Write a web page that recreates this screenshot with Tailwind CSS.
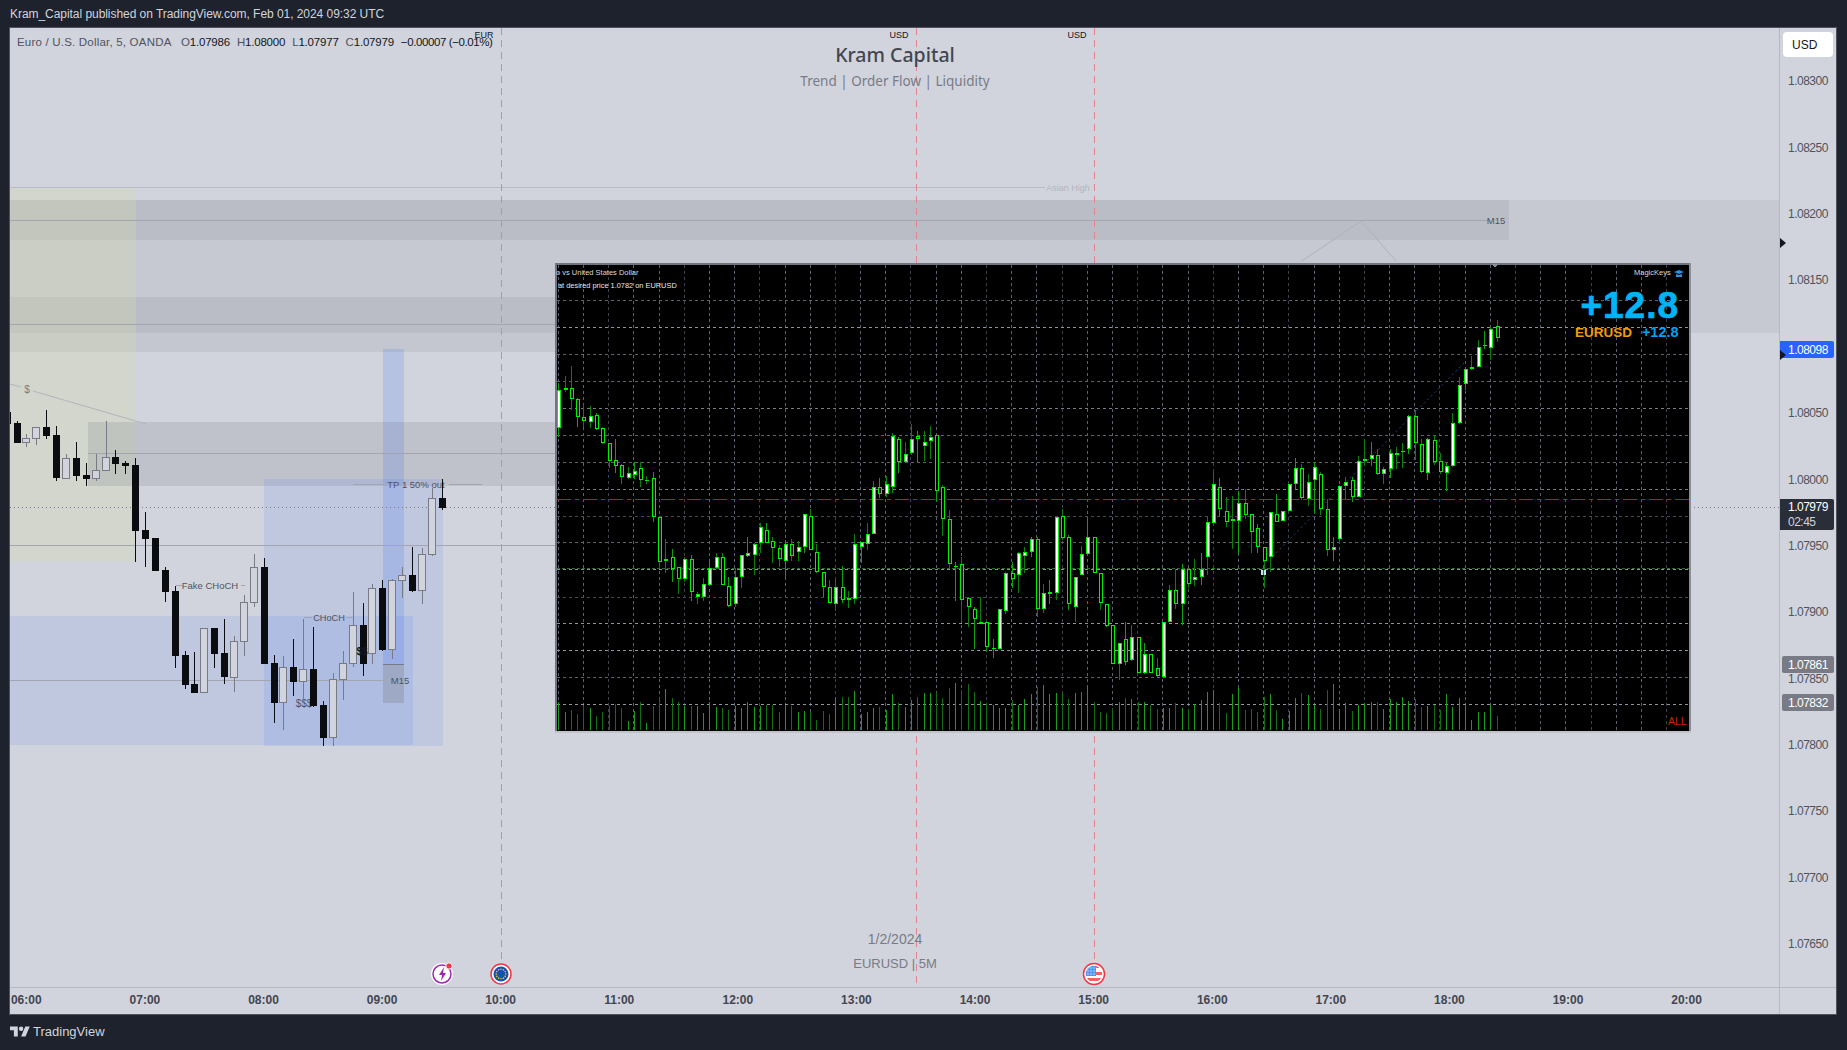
<!DOCTYPE html>
<html lang="en">
<head>
    <meta charset="UTF-8">
    <title>EURUSD chart - TradingView</title>
    <script src="https://cdn.jsdelivr.net/npm/@tailwindcss/browser@4"></script>
</head>
<body class="bg-[#1e222d] h-[1050px] w-[1847px] overflow-hidden font-['Liberation_Sans',sans-serif]">
    <!-- top bar -->
    <div class="h-[27px] pl-[10px] flex items-center text-[12px] tracking-[-0.05px] text-[#d1d4dc]">Kram_Capital published on TradingView.com, Feb 01, 2024 09:32 UTC</div>

    <!-- chart frame -->
    <div class="ml-[9px] w-[1828px] border border-[#50535e] bg-[#d1d4dc]">
        <div class="flex h-[959px]">
            <div class="relative w-[1769px] overflow-hidden">
                <svg id="chart" width="1769" height="959" viewBox="10 28 1769 959" class="block" font-family="'Liberation Sans', sans-serif" shape-rendering="crispEdges"></svg>
                <!-- legend -->
                <div class="absolute left-[7px] top-[6px] flex gap-[7px] text-[11.5px] tracking-[-0.2px] text-[#131722]">
                    <span class="text-[#50535e] w-[157px] whitespace-nowrap tracking-[0.2px]">Euro / U.S. Dollar, 5, OANDA</span>
                    <span class="whitespace-nowrap"><span class="text-[#50535e]">O</span>1.07986</span>
                    <span class="whitespace-nowrap"><span class="text-[#50535e]">H</span>1.08000</span>
                    <span class="whitespace-nowrap"><span class="text-[#50535e]">L</span>1.07977</span>
                    <span class="whitespace-nowrap"><span class="text-[#50535e]">C</span>1.07979</span>
                    <span class="whitespace-nowrap tracking-[-0.4px]">−0.00007 (−0.01%)</span>
                </div>
            </div>
            <!-- price scale -->
            <div class="relative w-[57px] border-l border-[#b6b9c2] pt-[20px] pl-[8px] text-[12px] tracking-[-0.5px] text-[#50535e]">
                <div class="h-[66.4px] flex items-center">1.08300</div>
                <div class="h-[66.4px] flex items-center">1.08250</div>
                <div class="h-[66.4px] flex items-center">1.08200</div>
                <div class="h-[66.4px] flex items-center">1.08150</div>
                <div class="h-[66.4px]"></div>
                <div class="h-[66.4px] flex items-center">1.08050</div>
                <div class="h-[66.4px] flex items-center">1.08000</div>
                <div class="h-[66.4px] flex items-center">1.07950</div>
                <div class="h-[66.4px] flex items-center">1.07900</div>
                <div class="h-[66.4px] flex items-center">1.07850</div>
                <div class="h-[66.4px] flex items-center">1.07800</div>
                <div class="h-[66.4px] flex items-center">1.07750</div>
                <div class="h-[66.4px] flex items-center">1.07700</div>
                <div class="h-[66.4px] flex items-center">1.07650</div>

                <div class="absolute left-[3px] top-[4px] w-[50px] h-[25px] bg-white rounded-[4px] pl-[9px] flex items-center tracking-normal text-[#131722]">USD</div>
                <div class="absolute left-0 top-[313px] w-[54px] h-[17px] bg-[#2962ff] rounded-r-[2px] pl-[8px] flex items-center text-white">1.08098</div>
                <div class="absolute left-0 top-[471px] w-[54px] h-[31px] bg-[#2a2e39] rounded-r-[2px] pl-[8px] flex flex-col justify-center leading-[15px] text-white">
                    <span>1.07979</span>
                    <span class="text-[#d1d4dc]">02:45</span>
                </div>
                <div class="absolute left-[2px] top-[628px] w-[52px] h-[17px] bg-[#787b86] rounded-[2px] pl-[6px] flex items-center text-white">1.07861</div>
                <div class="absolute left-[2px] top-[666px] w-[52px] h-[17px] bg-[#787b86] rounded-[2px] pl-[6px] flex items-center text-white">1.07832</div>

                <svg class="absolute left-0 top-[210px]" width="7" height="10"><path d="M0 0l6 5-6 5z" fill="#131722"/></svg>
                <svg class="absolute left-0 top-[322px]" width="7" height="10"><path d="M0 0l6 5-6 5z" fill="#131722"/></svg>
            </div>
        </div>
        <!-- time axis -->
        <div class="flex h-[27px] border-t border-[#b6b9c2] overflow-hidden">
            <div class="w-[1769px] overflow-hidden">
                <div class="flex -ml-[43px] h-full items-center pb-[2px] text-[12px] font-bold text-[#434651]">
                    <span class="w-[118.6px] shrink-0 text-center">06:00</span>
                    <span class="w-[118.6px] shrink-0 text-center">07:00</span>
                    <span class="w-[118.6px] shrink-0 text-center">08:00</span>
                    <span class="w-[118.6px] shrink-0 text-center">09:00</span>
                    <span class="w-[118.6px] shrink-0 text-center">10:00</span>
                    <span class="w-[118.6px] shrink-0 text-center">11:00</span>
                    <span class="w-[118.6px] shrink-0 text-center">12:00</span>
                    <span class="w-[118.6px] shrink-0 text-center">13:00</span>
                    <span class="w-[118.6px] shrink-0 text-center">14:00</span>
                    <span class="w-[118.6px] shrink-0 text-center">15:00</span>
                    <span class="w-[118.6px] shrink-0 text-center">16:00</span>
                    <span class="w-[118.6px] shrink-0 text-center">17:00</span>
                    <span class="w-[118.6px] shrink-0 text-center">18:00</span>
                    <span class="w-[118.6px] shrink-0 text-center">19:00</span>
                    <span class="w-[118.6px] shrink-0 text-center">20:00</span>
                </div>
            </div>
            <div class="w-[57px] border-l border-[#b6b9c2]"></div>
        </div>
    </div>

    <!-- footer -->
    <div class="h-[33px] pl-[10px] flex items-center gap-[3px] text-[13px] text-[#d1d4dc]">
        <svg width="20" height="16" viewBox="0 0 36 28" fill="#d1d4dc"><path d="M14 22H7V11H0V4h14v18zM28 22h-8l7.5-18h8L28 22z"/><circle cx="20" cy="8" r="4"/></svg>
        <span>TradingView</span>
    </div>

    <script>
        const svg = document.getElementById('chart');
        let out = '';

        function rect(x, y, w, h, fill, op) {
            out += `<rect x="${x}" y="${y}" width="${w}" height="${h}" fill="${fill}"${op ? ` fill-opacity="${op}"` : ''}/>`;
        }
        function line(x1, y1, x2, y2, stroke, extra) {
            out += `<line x1="${x1}" y1="${y1}" x2="${x2}" y2="${y2}" stroke="${stroke}" ${extra || ''}/>`;
        }
        function label(x, y, text, size, fill, extra) {
            out += `<text x="${x}" y="${y}" font-size="${size}" fill="${fill}" dominant-baseline="central" shape-rendering="auto" ${extra || ''}>${text}</text>`;
        }

        // drawn zones
        rect(10, 200, 1769, 133, '#787b86', .12);
        rect(10, 200, 1499, 40, '#787b86', .14);
        rect(10, 297, 546, 55, '#787b86', .14);
        rect(10, 187, 126, 374, '#d8dbaa', .3);
        rect(88, 422, 468, 64, '#787b86', .2);
        rect(10, 616, 403, 129, '#2962ff', .1);
        rect(264, 479, 179, 267, '#2962ff', .1);
        rect(383, 349, 21, 315, '#2962ff', .16);
        rect(383, 664, 21, 39, '#787b86', .3);
        rect(383, 664, 21, 1, '#787b86');

        // drawn lines
        line(10, 187.5, 1045, 187.5, '#b8bbc4');
        line(10, 220.5, 1490, 220.5, '#a3a6b0');
        line(10, 324.5, 556, 324.5, '#a3a6b0');
        line(88, 453.5, 556, 453.5, '#a3a6b0');
        line(10, 545.5, 556, 545.5, '#a3a6b0', 'stroke-width="1.5"');
        line(10, 680.5, 387, 680.5, '#a3a6b0');
        line(353, 484.5, 388, 484.5, '#a3a6b0');
        line(449, 484.5, 482, 484.5, '#a3a6b0');
        line(176, 585.5, 182, 585.5, '#a3a6b0');
        line(241, 585.5, 245, 585.5, '#a3a6b0');
        line(304, 617.5, 312, 617.5, '#a3a6b0');
        line(346, 617.5, 354, 617.5, '#a3a6b0');
        line(10, 384, 21, 387, '#b2b5be', 'shape-rendering="auto"');
        line(33, 391, 146, 424, '#b2b5be', 'shape-rendering="auto"');
        line(1302, 261, 1361, 221, '#aeb1ba', 'shape-rendering="auto"');
        line(1361, 221, 1396, 261, '#aeb1ba', 'shape-rendering="auto"');
        line(10, 507.5, 1779, 507.5, '#787b86', 'stroke-dasharray="1 3"');

        // session lines
        [501, 916, 1094].forEach(x => line(x + .5, 28, x + .5, 987, '#e0848f', 'stroke-dasharray="7 5"'));

        // chart labels
        label(1068, 187.5, 'Asian High', 9, '#b2b5be', 'text-anchor="middle"');
        label(1496, 220.5, 'M15', 9.5, '#50535e', 'text-anchor="middle"');
        label(27, 389.5, '$', 10, '#787b86', 'text-anchor="middle"');
        label(210, 585.5, 'Fake CHoCH', 9.5, '#50535e', 'text-anchor="middle"');
        label(329, 617.5, 'CHoCH', 9.2, '#50535e', 'text-anchor="middle"');
        label(416, 484.5, 'TP 1 50% out', 9.5, '#50535e', 'text-anchor="middle"');
        label(400, 680.5, 'M15', 9.5, '#50535e', 'text-anchor="middle"');
        label(304, 703, '$$$', 10, '#50535e', 'text-anchor="middle"');
        label(484, 35, 'EUR', 9, '#131722', 'text-anchor="middle"');
        label(899, 35, 'USD', 9, '#131722', 'text-anchor="middle"');
        label(1077, 35, 'USD', 9, '#131722', 'text-anchor="middle"');
        label(895, 54, 'Kram Capital', 19.5, '#434651', 'text-anchor="middle" font-weight="500" font-family="\'Noto Sans\', sans-serif"');
        label(895, 81, 'Trend | Order Flow | Liquidity', 13.5, '#787b86', 'text-anchor="middle" font-family="\'Noto Sans\', sans-serif"');
        label(895, 938.5, '1/2/2024', 14, '#787b86', 'text-anchor="middle"');
        label(895, 963, 'EURUSD | 5M', 13, '#787b86', 'text-anchor="middle"');

        // candles left of the inset window: [bull?, wick top, body top, body bottom, wick bottom], first is i=-2
        const tv = [
            [0,185,185,221,221],[0,213,219,278,278],[1,252,265,277,290],[1,232,232,265,284],[0,180,232,257,266],
            [0,228,255,383,392],[1,312,325,383,388],[0,277,324,377,392],[0,338,375,386,407],[1,312,361,385,392],
            [1,213,322,361,361],[0,300,322,342,372],[0,333,339,347,372],[0,324,345,542,635],[0,486,540,566,650],
            [0,564,564,662,662],[0,650,660,725,755],[0,708,724,917,953],[0,903,915,1004,1016],[0,906,1002,1028,1028],
            [1,835,835,1027,1027],[0,834,834,911,953],[0,807,909,980,1001],[1,858,874,980,1025],[1,735,757,874,917],
            [1,612,652,757,770],[0,624,651,941,941],[0,915,939,1058,1120],[1,918,952,1057,1139],[0,867,951,995,1037],
            [1,807,958,994,1060],[0,831,957,1067,1072],[0,1053,1065,1163,1188],[1,968,988,1162,1188],[1,903,940,988,1050],
            [1,726,826,940,950],[0,759,825,941,977],[1,702,715,910,941],[0,690,714,899,902],[1,687,691,898,926],
            [1,651,676,691,743],[0,590,675,722,725],[1,595,613,721,761],[1,415,445,613,617],[0,388,444,473,479]
        ];
        const zy = v => Math.round(350 + v / 3);
        tv.forEach((c, n) => {
            const x = Math.round(26.4 + (n - 2) * 9.888);
            const col = c[0] ? '#787b86' : '#0a0c10';
            rect(x, zy(c[1]), 1, zy(c[4]) - zy(c[1]), col);
            if (c[0]) {
                out += `<rect x="${x - 3.5}" y="${zy(c[2]) + .5}" width="7" height="${zy(c[3]) - zy(c[2])}" fill="#d1d4dc" stroke="#787b86"/>`;
            } else {
                rect(x - 3, zy(c[2]), 7, zy(c[3]) - zy(c[2]), col);
            }
        });
        label(362, 651, '$$', 10, '#131722', 'text-anchor="middle" font-weight="bold"');

        // inset MT4 screenshot
        rect(555, 263, 1136, 470, '#000');
        rect(555, 263, 1136, 2, '#707480');
        rect(555, 263, 2, 470, '#707480');
        rect(1689, 263, 2, 470, '#8a8d96');
        rect(555, 731, 1136, 2, '#c0c3c8');

        const hLines = [[300,'#5c6470'],[327,'#8d95a0'],[354,'#5c6470'],[381,'#5c6470'],[408,'#747c88'],[435,'#5c6470'],[462,'#5c6470'],[489,'#747c88'],[516,'#454950'],[542,'#5c6470'],[569,'#8d95a0'],[597,'#454950'],[623,'#8d95a0'],[650,'#8d95a0'],[677,'#5c6470'],[704,'#8d95a0']];
        for (let k = -1; k < 44; k++) {
            const x = Math.round(583 + 25.19 * k) + .5;
            line(x, 265, x, 731, k % 3 == 1 ? '#3d434c' : '#59626e', 'stroke-dasharray="3 3"');
        }
        hLines.forEach(h => line(557, h[0] + .5, 1689, h[0] + .5, h[1], 'stroke-dasharray="3 3"'));
        line(557, 499.5, 1689, 499.5, '#d01414', 'stroke-dasharray="14 4 4 4"');
        line(557, 568.5, 1689, 568.5, '#2f6b2f', 'stroke-dasharray="3 2"');
        line(1464, 363, 1270, 559, '#1f4a80', 'stroke-dasharray="2 3" shape-rendering="auto"');

        // volume bars, heights in px
        const vols = [28,18,20,16,24,22,14,18,24,26,22,9,19,28,7,24,32,41,32,28,24,24,24,17,28,23,22,20,24,22,28,23,24,25,25,18,24,24,18,19,18,10,19,16,33,33,33,39,16,18,22,23,20,36,27,23,30,33,37,37,38,32,42,47,40,46,38,29,27,25,22,22,30,25,31,36,43,45,36,37,37,31,37,38,43,28,18,17,22,28,32,31,28,28,25,21,22,22,27,22,21,26,30,38,40,27,17,36,42,20,21,18,33,36,20,11,19,32,37,35,25,21,40,46,21,27,19,25,27,28,28,21,31,28,33,29,31,23,24,25,20,36,23,32,24,10,18,18,25,14];

        // [white?, wick top, body top, body bottom, wick bottom], page px
        const mt = [
            [1,383,390,428,437],[1,376,388,390,392],[0,366,388,399,410],[0,398,399,417,427],[0,404,417,421,427],[1,406,416,422,428],[0,413,415,429,430],[0,427,428,443,444],[0,443,443,461,468],[0,439,460,466,473],
            [0,464,465,477,484],[1,467,473,478,479],[1,462,471,475,479],[0,462,468,480,487],[1,476,480,481,484],[0,472,478,517,522],[0,517,517,562,568],[1,539,559,561,573],[0,549,557,569,582],[0,567,567,579,594],
            [1,557,559,579,582],[0,555,559,592,601],[1,592,594,597,604],[1,578,584,597,601],[1,561,568,585,585],[1,553,557,568,569],[0,553,557,585,585],[0,577,586,606,607],[1,568,577,604,607],[1,555,555,577,588],
            [1,537,553,556,557],[1,543,544,555,575],[1,523,527,543,553],[0,523,530,543,543],[0,537,541,548,563],[0,545,548,559,567],[1,540,544,561,578],[0,539,544,556,561],[1,541,547,552,561],[1,514,514,547,553],
            [0,509,516,550,550],[0,544,552,572,573],[0,572,572,587,597],[0,580,587,603,603],[1,580,587,604,611],[0,566,587,600,603],[0,591,598,600,608],[1,534,544,599,604],[1,542,542,547,563],[1,523,534,544,550],
            [1,481,487,534,534],[0,478,487,494,498],[1,476,484,494,497],[1,433,436,487,493],[0,437,439,462,473],[1,442,454,462,462],[1,424,439,453,455],[0,431,436,439,462],[1,431,442,446,461],[1,426,437,441,459],
            [0,435,435,491,502],[0,485,487,519,536],[0,510,519,564,568],[1,562,566,567,601],[0,557,564,600,623],[0,597,598,607,627],[0,607,609,619,649],[1,597,622,624,623],[0,622,622,647,652],[1,639,648,649,658],
            [1,609,609,649,649],[1,572,573,611,614],[0,562,573,579,588],[1,552,553,575,593],[1,547,552,556,573],[1,537,539,552,557],[0,537,539,609,617],[1,584,593,609,613],[1,580,592,594,604],[1,517,517,593,600],
            [0,509,516,538,540],[0,535,537,604,610],[1,577,577,607,622],[1,546,554,575,575],[1,519,537,554,554],[0,537,537,573,573],[0,573,573,603,610],[0,604,604,626,627],[0,625,625,664,664],[1,643,643,664,680],
            [0,622,639,662,665],[1,625,637,660,661],[0,637,637,673,673],[1,643,654,673,674],[0,654,654,673,673],[0,658,668,676,677],[1,622,622,677,677],[1,585,590,622,622],[0,569,590,604,609],[1,564,569,604,625],
            [0,569,569,584,588],[1,559,577,580,586],[1,553,569,577,585],[1,517,522,557,575],[1,472,484,523,523],[0,478,487,509,517],[0,497,511,522,527],[1,496,519,521,549],[1,491,503,521,554],[0,489,503,515,519],
            [0,514,514,532,553],[0,524,528,547,553],[0,547,547,561,588],[1,512,512,557,572],[0,494,514,522,522],[1,511,511,521,521],[1,484,484,511,511],[1,458,468,484,489],[0,464,468,498,500],[1,474,482,499,506],
            [1,462,467,480,513],[0,472,474,509,515],[0,499,509,550,556],[1,537,547,550,561],[1,485,486,539,544],[1,477,482,486,500],[0,477,480,497,502],[1,456,461,497,497],[1,439,459,461,466],[1,442,455,459,466],
            [0,449,455,474,475],[1,467,469,474,484],[1,449,453,469,478],[1,447,453,455,469],[1,443,451,452,468],[1,415,416,449,454],[0,410,416,443,460],[0,439,444,472,473],[1,438,439,473,480],[0,435,440,462,465],
            [0,453,461,472,474],[1,463,466,473,491],[1,413,423,466,467],[1,377,385,423,424],[1,369,369,384,390],[1,356,367,369,370],[1,340,347,367,367],[1,331,345,346,349],[1,327,329,348,360],[0,320,326,338,342]
        ];
        mt.forEach((c, i) => {
            const x = Math.round(558.3 + 6.297 * i);
            const h = c[3] - c[2];
            rect(x, 730 - vols[i], 1, vols[i], c[0] ? '#1c9c1c' : '#126c12');
            rect(x, c[1], 1, c[4] - c[1], i % 3 == 0 ? '#0fa00f' : '#0b7f0b');
            rect(x - 1, c[2], 4, h, '#00f000');
            if (h > 2) rect(x, c[2] + 1, 2, h - 2, c[0] ? '#fff' : '#000');
        });
        rect(1261, 570, 5, 5, '#bfe6ee');
        rect(1263, 570, 1, 5, '#1c6b7a');
        out += `<path d="M1492 264h6l-3 4z" fill="#8a8d96"/>`;

        label(556, 272.5, 'o vs United States Dollar', 7.5, '#d8d8d8');
        label(558, 285, 'at desired price 1.0782 on EURUSD', 7.4, '#e8e8e8');
        label(1634, 272.5, 'MagicKeys', 7.5, '#d8d8d8');
        out += `<path d="M1674 272l5-2 5 2-5 2zM1676 274v3h6v-3l-3 1z" fill="#2f8fe0" shape-rendering="auto"/>`;
        label(1679, 305, '+12.8', 37, '#00b4f5', 'text-anchor="end" font-weight="bold" stroke="#00b4f5" stroke-width=".7" letter-spacing="1"');
        label(1575, 332, 'EURUSD', 13.5, '#f29a0e', 'font-weight="bold"');
        label(1678.6, 332, '+12.8', 14.5, '#00a3f0', 'text-anchor="end" font-weight="bold"');
        label(1668, 721, 'ALL', 10.5, '#c42a00');

        // event markers on the time axis
        out += '<g shape-rendering="auto">';
        out += `<circle cx="442" cy="974" r="10" fill="#fff" stroke="#fff" stroke-width="2"/><circle cx="442" cy="974" r="9" fill="#fff" stroke="#9c27b0" stroke-width="1.5"/>`;
        out += `<path d="M444 967l-5 8h3l-1 6 5-8h-3z" fill="#9c27b0"/>`;
        out += `<circle cx="449" cy="966" r="3.2" fill="#f23645" stroke="#fff"/>`;
        out += `<circle cx="501" cy="974" r="10" fill="#fff" stroke="#f23645" stroke-width="1.5"/><circle cx="501" cy="974" r="7.5" fill="#1552a8"/>`;
        for (let a = 0; a < 12; a += 1) {
            const t = a * Math.PI / 6;
            out += `<circle cx="${501 + 4.8 * Math.cos(t)}" cy="${974 + 4.8 * Math.sin(t)}" r=".8" fill="#e8c93a"/>`;
        }
        out += `<circle cx="1094" cy="974" r="10.5" fill="#fff" stroke="#f23645" stroke-width="1.5"/>`;
        out += `<clipPath id="us"><circle cx="1094" cy="974" r="8.2"/></clipPath><g clip-path="url(#us)">`;
        out += `<rect x="1085" y="972" width="18" height="3" fill="#f4605a"/><rect x="1085" y="978" width="18" height="3" fill="#f4605a"/><rect x="1096" y="966" width="8" height="2" fill="#f4605a"/>`;
        out += `<rect x="1085" y="965" width="11" height="11" fill="#2d8cf0"/>`;
        out += `<path d="M1088 965v11M1091 965v11M1094 965v11M1085 968h11M1085 971h11M1085 974h11" stroke="#bcd9f8" stroke-width=".6"/></g>`;
        out += '</g>';

        svg.innerHTML = out;
    </script>
</body>
</html>
